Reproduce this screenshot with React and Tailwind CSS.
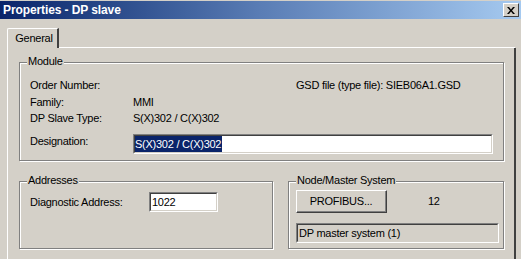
import React from "react";

function Group({ label, className, children }) {
  return (
    <div
      className={
        "relative border border-[#808080] shadow-[inset_1px_1px_0_#fff,1px_1px_0_#fff] " +
        className
      }
    >
      <span className="absolute -top-[8px] left-[7px] px-[1px] bg-[#d4d0c8] leading-[13px]">
        {label}
      </span>
      {children}
    </div>
  );
}

function Field({ className, children, fill = "bg-white" }) {
  return (
    <div className={"border-t border-l border-t-[#808080] border-l-[#808080] border-b border-r border-b-white border-r-white " + className}>
      <div className={"h-full w-full border-t border-l border-t-[#404040] border-l-[#404040] border-b border-r border-b-[#d4d0c8] border-r-[#d4d0c8] flex items-center " + fill}>
        {children}
      </div>
    </div>
  );
}

export default function App() {
  return (
    <div className="w-[521px] h-[259px] bg-[#d4d0c8] overflow-hidden font-['Liberation_Sans',Arial,sans-serif] text-[11px] tracking-[-0.25px] text-[#000] pt-[1px]">
      {/* Title bar */}
      <div className="h-[18px] flex items-center justify-between pl-[3px] pr-[2px] bg-gradient-to-r from-[#0a246a] via-[#5a7db5] to-[#a6caf0]">
        <span className="text-white font-bold text-[12px] tracking-[-0.1px] leading-[14px]">
          Properties - DP slave
        </span>
        <div className="w-[16px] h-[14px] bg-[#d4d0c8] border-t border-l border-t-white border-l-white border-b border-r border-b-[#404040] border-r-[#404040] flex items-center justify-center">
          <svg width="8" height="7" viewBox="0 0 8 7">
            <path d="M0 0h2l2 2.5L6 0h2L5 3.5 8 7H6L4 4.5 2 7H0l3-3.5z" fill="#000" />
          </svg>
        </div>
      </div>

      {/* Tabs */}
      <div className="mt-[9px] ml-[7px] flex items-end h-[20px]">
        <div className="h-[20px] w-[52px] border-t border-l border-t-white border-l-white rounded-tl-[2px] border-r-2 border-r-[#404040] flex items-center justify-center pl-[3px]">
          <span className="leading-[13px]">General</span>
        </div>
        <div className="w-[456px] border-b border-b-white" />
      </div>

      {/* Pane */}
      <div className="ml-[7px] w-[509px] h-[300px] border-l border-l-white border-r-2 border-r-[#404040] pl-[11px] pt-[14px]">
        <Group label="Module" className="w-[485px] h-[99px] pl-[10px] pt-[14px]">
          <div className="flex items-center h-[16px]">
            <span className="w-[266px]">Order Number:</span>
            <span>GSD file (type file): SIEB06A1.GSD</span>
          </div>
          <div className="flex items-center h-[16px] mt-[1px]">
            <span className="w-[103px]">Family:</span>
            <span>MMI</span>
          </div>
          <div className="flex items-center h-[16px]">
            <span className="w-[103px]">DP Slave Type:</span>
            <span>S(X)302 / C(X)302</span>
          </div>
          <div className="flex items-start mt-[8px]">
            <span className="w-[103px] pt-[1px] leading-[13px]">Designation:</span>
            <Field className="w-[360px] h-[20px]">
              <span className="bg-[#0a246a] text-white h-full flex items-center leading-[13px] pr-[1px]">
                S(X)302 / C(X)302
              </span>
            </Field>
          </div>
        </Group>

        <div className="flex mt-[20px]">
          <Group label="Addresses" className="w-[254px] h-[68px] pl-[10px] pt-[10px]">
            <div className="flex items-center">
              <span className="w-[119px]">Diagnostic Address:</span>
              <Field className="w-[69px] h-[20px]">
                <span className="pl-[1px] leading-[13px]">1022</span>
              </Field>
            </div>
          </Group>

          <Group label="Node/Master System" className="ml-[15px] w-[216px] h-[68px] pl-[7px] pt-[8px]">
            <div className="flex items-center">
              <div className="w-[91px] h-[23px] border-t border-l border-t-white border-l-white border-b border-r border-b-[#404040] border-r-[#404040]">
                <div className="h-full w-full border-b border-r border-b-[#808080] border-r-[#808080] flex items-center justify-center">
                  <span className="leading-[13px]">PROFIBUS...</span>
                </div>
              </div>
              <span className="ml-[41px]">12</span>
            </div>
            <Field className="mt-[10px] w-[203px] h-[20px]" fill="bg-[#d4d0c8]">
              <span className="pl-[1px] leading-[13px]">DP master system (1)</span>
            </Field>
          </Group>
        </div>
      </div>
    </div>
  );
}
